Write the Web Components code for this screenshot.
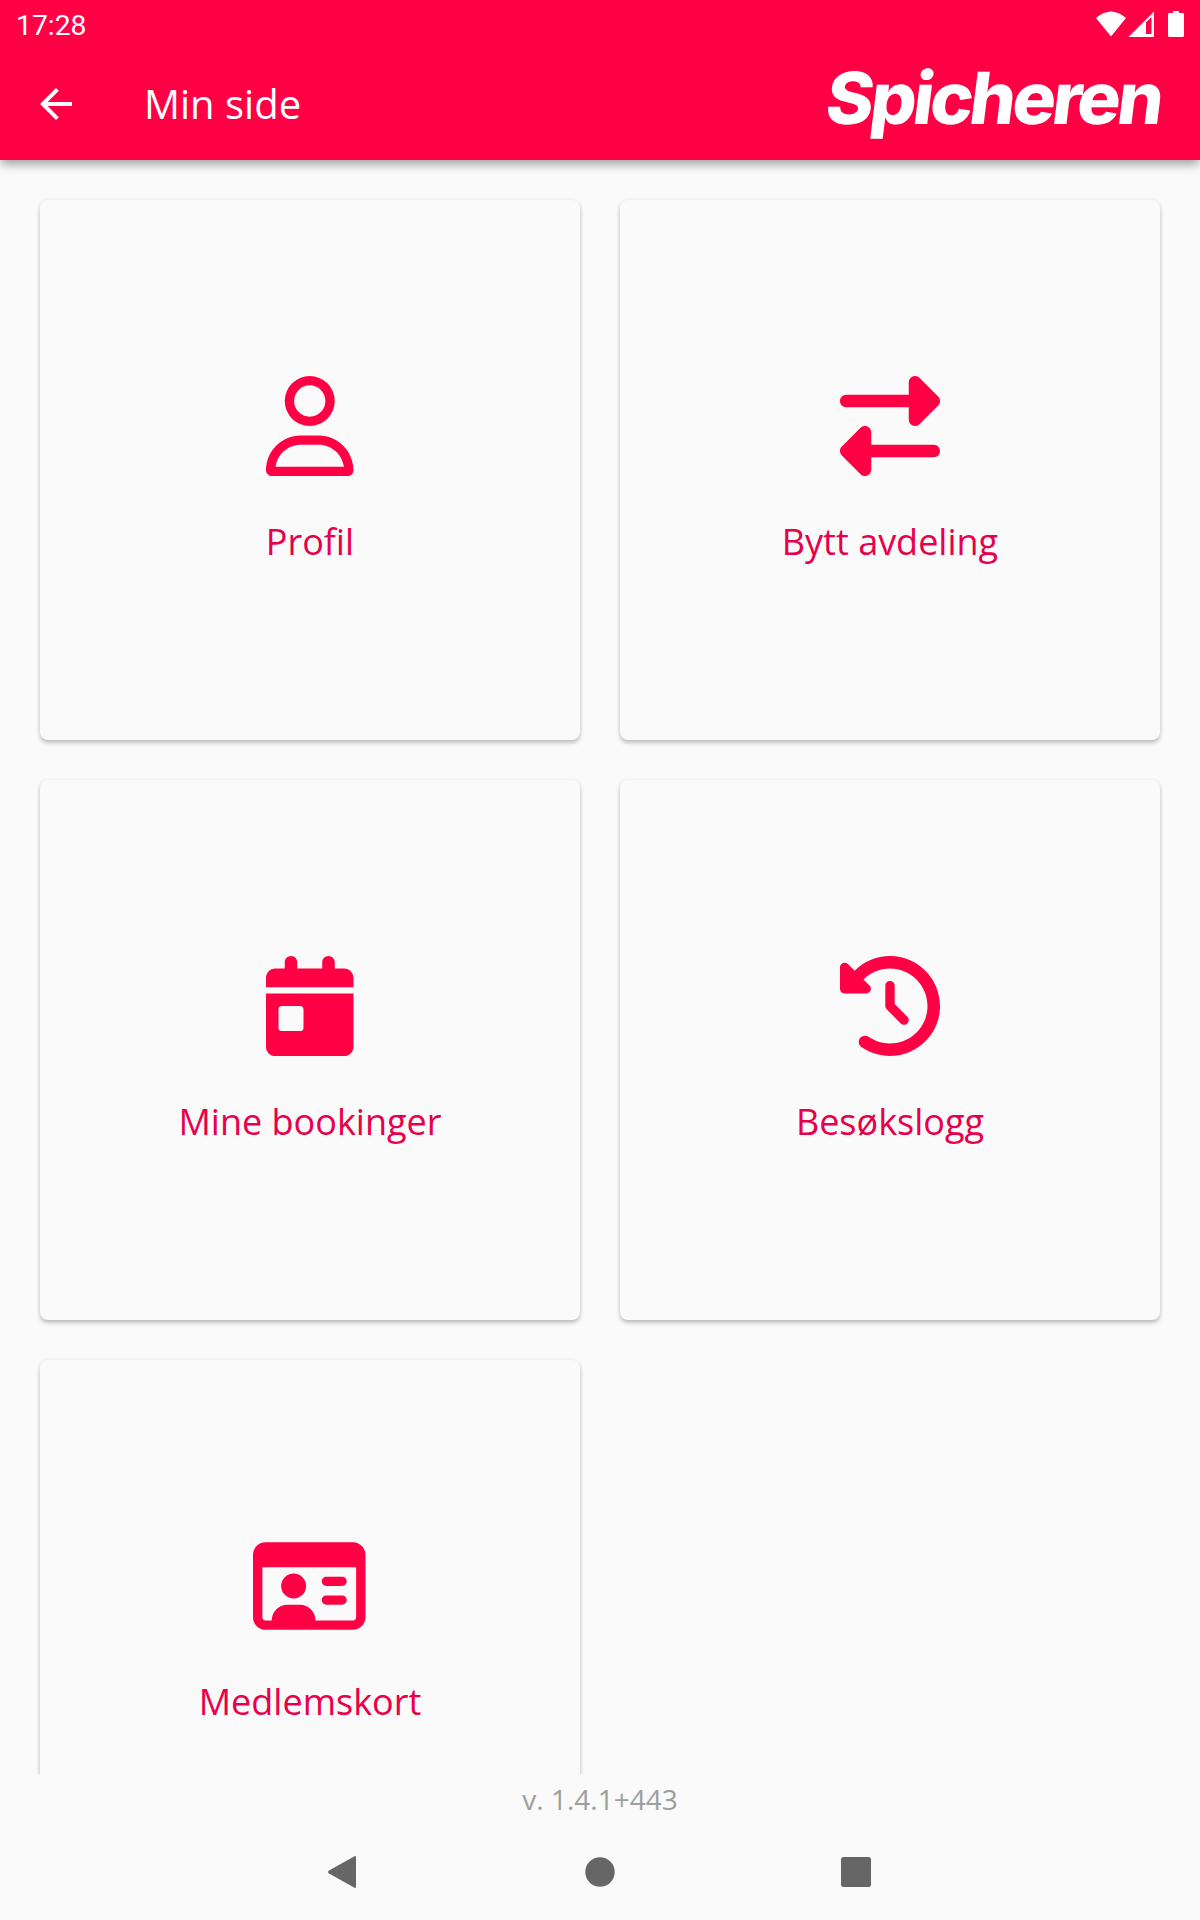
<!DOCTYPE html>
<html lang="no">
<head>
<meta charset="utf-8">
<title>Min side</title>
<style>
    body {
        margin: 0;
        background-color: #fafafa;
        font-family: "Open Sans", "Noto Sans", sans-serif;
    }
</style>
</head>
<body>
<my-page></my-page>
<script>
const icons = {
    user: {
        width: 448,
        path: "M304 128a80 80 0 1 0 -160 0 80 80 0 1 0 160 0zM96 128a128 128 0 1 1 256 0A128 128 0 1 1 96 128zM49.3 464H398.7c-8.9-63.3-63.3-112-129-112H178.3c-65.7 0-120.1 48.7-129 112zM0 482.3C0 383.8 79.8 304 178.3 304h91.4C368.2 304 448 383.8 448 482.3c0 16.4-13.3 29.7-29.7 29.7H29.7C13.3 512 0 498.7 0 482.3z"
    },
    swap: {
        width: 512,
        path: "M32 96H352V32c0-12.9 7.8-24.6 19.8-29.6s25.7-2.2 34.9 6.9l96 96c6 6 9.4 14.1 9.4 22.6s-3.4 16.6-9.4 22.6l-96 96c-9.2 9.2-22.9 11.9-34.9 6.9s-19.8-16.6-19.8-29.6V160H32c-17.7 0-32-14.3-32-32s14.3-32 32-32zM480 352c17.7 0 32 14.3 32 32s-14.3 32-32 32H160v64c0 12.9-7.8 24.6-19.8 29.6s-25.7 2.2-34.9-6.9l-96-96c-6-6-9.4-14.1-9.4-22.6s3.4-16.6 9.4-22.6l96-96c9.2-9.2 22.9-11.9 34.9-6.9s19.8 16.6 19.8 29.6v64H480z"
    },
    calendar: {
        width: 448,
        path: "M128 0c17.7 0 32 14.3 32 32V64H288V32c0-17.7 14.3-32 32-32s32 14.3 32 32V64h48c26.5 0 48 21.5 48 48v48H0V112C0 85.5 21.5 64 48 64H96V32c0-17.7 14.3-32 32-32zM0 192H448V464c0 26.5-21.5 48-48 48H48c-26.5 0-48-21.5-48-48V192zm80 64c-8.8 0-16 7.2-16 16v96c0 8.8 7.2 16 16 16h96c8.8 0 16-7.2 16-16V272c0-8.8-7.2-16-16-16H80z"
    },
    history: {
        width: 512,
        path: "M75 75L41 41C25.9 25.9 0 36.6 0 57.9V168c0 13.3 10.7 24 24 24H134.1c21.4 0 32.1-25.9 17-41l-30.8-30.8C155 85.5 203 64 256 64c106 0 192 86 192 192s-86 192-192 192c-40.8 0-78.6-12.7-109.7-34.4c-14.5-10.1-34.4-6.6-44.6 7.9s-6.6 34.4 7.9 44.6C151.2 495 201.7 512 256 512c141.4 0 256-114.6 256-256S397.4 0 256 0C185.3 0 121.3 28.7 75 75zm181 53c-13.3 0-24 10.7-24 24V256c0 6.4 2.5 12.5 7 17l72 72c9.4 9.4 24.6 9.4 33.9 0s9.4-24.6 0-33.9l-65-65V152c0-13.3-10.7-24-24-24z"
    },
    card: {
        width: 576,
        path: "M528 160V416c0 8.8-7.2 16-16 16H320c0-44.2-35.8-80-80-80H176c-44.2 0-80 35.8-80 80H64c-8.8 0-16-7.2-16-16V160H528zM64 32C28.7 32 0 60.7 0 96V416c0 35.3 28.7 64 64 64H512c35.3 0 64-28.7 64-64V96c0-35.3-28.7-64-64-64H64zM272 256a64 64 0 1 0 -128 0 64 64 0 1 0 128 0zm104-48c-13.3 0-24 10.7-24 24s10.7 24 24 24h80c13.3 0 24-10.7 24-24s-10.7-24-24-24H376zm0 96c-13.3 0-24 10.7-24 24s10.7 24 24 24h80c13.3 0 24-10.7 24-24s-10.7-24-24-24H376z"
    }
};

class StatusBar extends HTMLElement{
    constructor(){
        super();
        this.shadowDOM = this.attachShadow({mode: "open"});
        this.shadowDOM.innerHTML = `
        <style>
            :host {
                display: flex;
                justify-content: space-between;
                height: 48px;
                padding: 0 16px;
                color: white;
                font-family: Roboto, sans-serif;
                font-size: 28.300px;
                line-height: 51px;
            }
            svg {
                display: block;
                fill: white;
            }
        </style>
        <slot></slot>
        <svg width="88" height="48" viewBox="0 0 88 48">
            <path d="M0 18Q15 5 30 18L15 36.500z"/>
            <path fill-rule="evenodd" d="M58 11.500V37H32.500zM50 22.500V34H55.500V17z"/>
            <path d="M77 11h6v2h3.500q1.500 0 1.500 1.500v21q0 1.500-1.500 1.500h-13q-1.500 0-1.500-1.500v-21q0-1.500 1.500-1.500H77z"/>
        </svg>
        `;
    }
}

class AppBar extends HTMLElement{
    constructor(){
        super();
        this.shadowDOM = this.attachShadow({mode: "open"});
        this.shadowDOM.innerHTML = `
        <style>
            :host {
                display: flex;
                align-items: center;
                height: 112px;
                padding: 0 40px 0 32px;
                box-sizing: border-box;
                color: white;
            }
            h1 {
                flex: 1;
                margin: 0 0 0 64px;
                font-size: 40px;
                font-weight: 400;
                line-height: 56px;
            }
            svg {
                display: block;
                fill: white;
            }
            .logo {
                font-family: Inter, sans-serif;
                font-weight: 800;
                letter-spacing: -3.500px;
                overflow: visible;
            }
        </style>
        <svg width="48" height="48" viewBox="0 0 24 24">
            <path d="M20 11H7.830l5.590-5.590L12 4l-8 8 8 8 1.410-1.410L7.830 13H20v-2z"/>
        </svg>
        <h1><slot></slot></h1>
        <svg class="logo" width="333" height="112" viewBox="0 0 333 112">
            <text transform="translate(-3.500 75.500) skewX(-7)" font-size="72" textLength="334" lengthAdjust="spacingAndGlyphs">Spicheren</text>
        </svg>
        `;
    }
}

class MenuCard extends HTMLElement{
    constructor(){
        super();
        this.shadowDOM = this.attachShadow({mode: "open"});
    }

    connectedCallback(){
        this.render();
    }

    render(){
        const icon = icons[this.getAttribute("icon")];
        this.shadowDOM.innerHTML = `
        <style>
            :host {
                display: flex;
                flex-direction: column;
                align-items: center;
                justify-content: center;
                height: 540px;
                box-sizing: border-box;
                padding-top: 2px;
                border-radius: 8px;
                background-color: #fafafa;
                box-shadow: 0 3px 4px 0 rgba(0, 0, 0, 0.22), 0 0 4px 0 rgba(0, 0, 0, 0.07);
            }
            svg {
                display: block;
                height: 100px;
                fill: #ff0045;
            }
            :host([icon="card"]) svg {
                margin-right: 1.500px;
            }
            p {
                margin: 41.500px 0 0;
                color: #e8004a;
                font-size: 36px;
                line-height: 49px;
            }
        </style>
        <svg viewBox="0 0 ${icon.width} 512"><path d="${icon.path}"/></svg>
        <p><slot></slot></p>
        `;
    }
}

class NavBar extends HTMLElement{
    constructor(){
        super();
        this.shadowDOM = this.attachShadow({mode: "open"});
        this.shadowDOM.innerHTML = `
        <style>
            :host {
                display: flex;
                align-items: center;
                justify-content: center;
                gap: 208px;
                height: 96px;
            }
            svg {
                display: block;
                fill: #666;
            }
        </style>
        <svg width="48" height="48" viewBox="0 0 48 48"><path d="M9 22.500L34 8.400Q36 7.300 36 9.500v29q0 2.200-2 1.100L9 25.500q-2-1.500 0-3z"/></svg>
        <svg width="48" height="48" viewBox="0 0 48 48"><circle cx="24" cy="24" r="14.700"/></svg>
        <svg width="48" height="48" viewBox="0 0 48 48"><rect x="9" y="9" width="30" height="30" rx="2.500"/></svg>
        `;
    }
}

class MyPage extends HTMLElement{
    constructor(){
        super();
        this.shadowDOM = this.attachShadow({mode: "open"});
        this.shadowDOM.innerHTML = `
        <style>
            :host {
                display: flex;
                flex-direction: column;
                height: 1920px;
                overflow: hidden;
            }
            header {
                z-index: 1;
                background-color: #ff0045;
                box-shadow: 0 6px 9px -1px rgba(0, 0, 0, 0.28), 0 2px 10px 0 rgba(0, 0, 0, 0.1);
            }
            main {
                display: grid;
                flex: none;
                grid-template-columns: 1fr 1fr;
                align-content: start;
                gap: 40px;
                height: 1614px;
                box-sizing: border-box;
                padding: 40px;
                overflow: hidden;
            }
            footer {
                flex: 1;
                min-height: 0;
                color: #9e9e9e;
                font-size: 28px;
                line-height: 50px;
                text-align: center;
            }
            nav-bar {
                flex: none;
            }
        </style>
        <header>
            <status-bar>17:28</status-bar>
            <app-bar>Min side</app-bar>
        </header>
        <main>
            <menu-card icon="user">Profil</menu-card>
            <menu-card icon="swap">Bytt avdeling</menu-card>
            <menu-card icon="calendar">Mine bookinger</menu-card>
            <menu-card icon="history">Besøkslogg</menu-card>
            <menu-card icon="card">Medlemskort</menu-card>
        </main>
        <footer>v. 1.4.1+443</footer>
        <nav-bar></nav-bar>
        `;
    }
}

customElements.define("status-bar", StatusBar);
customElements.define("app-bar", AppBar);
customElements.define("menu-card", MenuCard);
customElements.define("nav-bar", NavBar);
customElements.define("my-page", MyPage);
</script>
</body>
</html>
